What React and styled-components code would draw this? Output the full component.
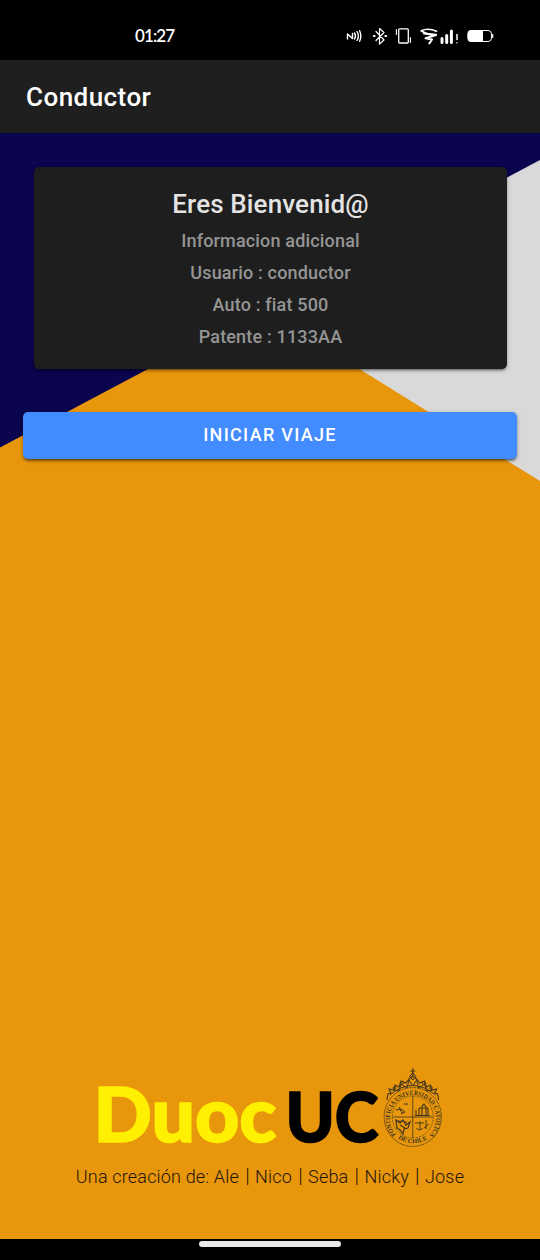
import React from "react";
import styled, { createGlobalStyle } from "styled-components";

const GlobalStyle = createGlobalStyle`
  * { box-sizing: border-box; }
  body { margin: 0; background: #000; font-family: Roboto, "Noto Sans", sans-serif; }
`;

const Screen = styled.div`
  width: 540px;
  height: 1260px;
  display: flex;
  flex-direction: column;
  background: #000;
  overflow: hidden;
`;

const StatusBar = styled.header`
  height: 60px;
  flex: none;
  display: flex;
  align-items: flex-start;
  justify-content: space-between;
  padding: 25px 46px 0 135px;
  color: #fff;
`;

const Clock = styled.time`
  font: 600 17px/22px Lato, sans-serif;
  letter-spacing: -0.9px;
`;

const StatusIcons = styled.svg`
  width: 150px;
  height: 22px;
  display: block;
`;

const Toolbar = styled.div`
  height: 73px;
  flex: none;
  display: flex;
  align-items: center;
  padding: 0 26px 0;
  background: #1f1f1f;
`;

const ToolbarTitle = styled.h1`
  margin: 0;
  font-size: 26px;
  line-height: 32px;
  font-weight: 500;
  letter-spacing: 0.45px;
  color: #fff;
`;

const Content = styled.main`
  height: 1106px;
  flex: none;
  display: flex;
  flex-direction: column;
  padding: 34px 23px 0;
  position: relative;
  isolation: isolate;
`;

const Backdrop = styled.svg`
  position: absolute;
  inset: 0;
  width: 100%;
  height: 100%;
  z-index: -1;
`;

const Card = styled.section`
  height: 202px;
  margin: 0 10px 0 11px;
  padding-top: 21px;
  border-radius: 5px;
  background: #1e1e1e;
  box-shadow: 0 3px 2px -2px rgba(0, 0, 0, 0.3), 0 2px 3px rgba(0, 0, 0, 0.2), 0 1px 5px rgba(0, 0, 0, 0.15);
  text-align: center;
`;

const CardTitle = styled.h2`
  margin: 0 0 5px;
  font-size: 26px;
  line-height: 32px;
  font-weight: 500;
  letter-spacing: 0.12px;
  color: #e4e4e4;
`;

const CardLine = styled.p`
  margin: 0;
  font-size: 18px;
  line-height: 32px;
  font-weight: 500;
  letter-spacing: 0.17px;
  color: #959595;
`;

const StartButton = styled.button`
  height: 47px;
  flex: none;
  margin: 43px 0 0;
  padding: 0 0 1px;
  border: 0;
  border-radius: 5px;
  background: #428cff;
  box-shadow: 0 3px 2px -2px rgba(0, 0, 0, 0.35), 0 2px 3px rgba(0, 0, 0, 0.3), 0 1px 5px rgba(0, 0, 0, 0.15);
  color: #fff;
  font: 500 18px/24px Roboto, sans-serif;
  letter-spacing: 1.3px;
`;

const Branding = styled.footer`
  margin-top: auto;
  padding-bottom: 47px;
  display: flex;
  flex-direction: column;
  align-items: center;
`;

const Logo = styled.svg`
  width: 360px;
  height: 84px;
  display: block;
  overflow: visible;
`;

const Credits = styled.p`
  margin: 12px 0 0;
  font: 300 18px/30px Roboto, "Noto Sans", sans-serif;
  letter-spacing: 0.17px;
  white-space: nowrap;
  color: #24150a;
`;

const Separator = styled.span`
  margin: 0 0.8px 0 1.6px;
  font-size: 20px;
  line-height: 1;
`;

const NavigationBar = styled.nav`
  flex: 1;
  display: flex;
  justify-content: center;
  padding-top: 2px;
`;

const NavigationHandle = styled.div`
  width: 142px;
  height: 6px;
  border-radius: 3px;
  background: #e9e9e9;
`;

function DeviceIcons() {
  return (
    <StatusIcons viewBox="344 25 150 22" fill="none" stroke="#fff" strokeLinecap="round" strokeLinejoin="round">
      <path d="M347.5 39v-5l5 4.5v-5" strokeWidth="1.4" />
      <path d="M354.5 33q2 3 0 6M357 31.5q2.7 4.5 0 9M359.6 30.7q2.4 5.3 0 10.6" strokeWidth="1.4" />
      <path d="M376 31.5l8 8.5-4.5 4V28.5l4.5 4-8 8" strokeWidth="1.2" />
      <path d="M373.8 36h.8M385.3 36h.8" strokeWidth="2" />
      <rect x="398.7" y="28.8" width="9.6" height="14.2" rx="1" strokeWidth="1.3" />
      <path d="M396.4 29.5v5M410.4 37.5v5" strokeWidth="1.1" />
      <path d="M436.500 31.200Q428 27.500 421.200 30.800Q427 35.200 436 34.600" strokeWidth="1.700" />
      <path d="M424 33.500L436 35L425.500 38.300L432 39.500L429.300 43.500" strokeWidth="2" />
      <path d="M442 38.500v4M446.700 35.500v7M451.400 31v11.500" strokeWidth="3" />
      <path d="M457 34.500v5M457 42.700v.1" strokeWidth="1.500" />
      <rect x="468" y="30.500" width="23.500" height="11" rx="3.500" strokeWidth="1" />
      <path d="M471.500 30H483v12h-11.500a4 4 0 0 1-4-4v-4a4 4 0 0 1 4-4Z" fill="#fff" stroke="none" />
      <path d="M492.700 34.500v3" strokeWidth="1.200" />
    </StatusIcons>
  );
}

function Crest() {
  return (
    <g fill="none" stroke="#40351e" strokeWidth="0.8">
      <defs>
        <path id="crestRing" d="M396 1134.500A23 23.500 0 1 1 430 1134.500" />
        <path id="crestBase" d="M398 1138.500A27 27.500 0 0 0 428 1138.500" />
      </defs>
      <ellipse cx="412.800" cy="1117" rx="28.600" ry="29.400" strokeDasharray="2 .6" />
      <ellipse cx="412.800" cy="1117" rx="20.500" ry="21" strokeWidth="0.600" strokeDasharray="2 1" />
      <path d="M392.500 1117h40.500M412.800 1096v42" />
      <g fill="#40351e" stroke="none" fontFamily="Liberation Serif, serif" fontSize="6.800" fontWeight="700">
        <text><textPath href="#crestRing" textLength="108" lengthAdjust="spacingAndGlyphs">PONTIFICIA UNIVERSIDAD CATOLICA</textPath></text>
        <text fontSize="6"><textPath href="#crestBase" textLength="31" lengthAdjust="spacingAndGlyphs">DE CHILE</textPath></text>
      </g>
      <path d="M387 1100l1-6 3-1-2-4 5 1 1-5 4 2 2-6 5 2 3-4 3.800-3 3.800 3 3 4 5-2 2 6 4-2 1 5 5-1-2 4 3 1 1 6" strokeWidth="1.100" />
      <path d="M390 1095q22-19 45.600 0M393 1090l6 1 2-7 6 4 2-8 3.800 6 3.800-6 2 8 6-4 2 7 6-1" strokeWidth="1" />
      <path d="M412.800 1068v8M410.300 1071h5M412.800 1072.500l-3 4 3 3.500 3-3.500Z" strokeWidth="1" />
      <circle cx="402" cy="1083" r="1.400" /><circle cx="423.600" cy="1083" r="1.400" />
      <circle cx="394.500" cy="1088" r="1.400" /><circle cx="431" cy="1088" r="1.400" />
      <path d="M396 1110l5-1 4 3-4 2M399 1107l3 6M404 1104h4" strokeWidth="1" />
      <path d="M416 1115v-5M419 1115v-7M422 1115v-9l2-2 2 3v8M428 1115v-7M415 1115.500h15M419 1108h9" strokeWidth="1.100" />
      <path d="M396 1120l4 3 3-3 3 5 4-3-2 6-4 1-1 5-3-4-3-2ZM400 1125l5 3M398 1121l9 1" strokeWidth="1.200" />
      <path d="M420 1121v9M416 1128q4 4 7 0M415 1123h9M426 1120v9M424 1128l5-4" strokeWidth="0.900" />
    </g>
  );
}

function DuocLogo() {
  return (
    <Logo viewBox="90 1066 360 84">
      <g fontFamily="Lato, Noto Sans, sans-serif" fontWeight="900" strokeWidth="1.600">
        <text x="93.500" y="1142.300" fontSize="76" textLength="183" lengthAdjust="spacingAndGlyphs" fill="#ffef00" stroke="#ffef00">Duoc</text>
        <text x="285.500" y="1142.300" fontSize="69" textLength="93" lengthAdjust="spacingAndGlyphs" fill="#000" stroke="#000">UC</text>
      </g>
      <Crest />
    </Logo>
  );
}

const authors = ["Ale", "Nico", "Seba", "Nicky", "Jose"];

export default function App() {
  return (
    <>
      <GlobalStyle />
      <Screen>
        <StatusBar>
          <Clock>01:27</Clock>
          <DeviceIcons />
        </StatusBar>
        <Toolbar>
          <ToolbarTitle>Conductor</ToolbarTitle>
        </Toolbar>
        <Content>
          <Backdrop viewBox="0 133 540 1106" preserveAspectRatio="none">
            <path fill="#0a054e" d="M0 133h540v1106H0z" />
            <path fill="#d9d9d9" d="M262 308.500L540 160V520L262 340z" />
            <path fill="#e8960c" d="M0 447.500L262 308.500L540 481V1239H0z" />
          </Backdrop>
          <Card>
            <CardTitle>Eres Bienvenid@</CardTitle>
            <CardLine>Informacion adicional</CardLine>
            <CardLine>Usuario : conductor</CardLine>
            <CardLine>Auto : fiat 500</CardLine>
            <CardLine>Patente : 1133AA</CardLine>
          </Card>
          <StartButton>INICIAR VIAJE</StartButton>
          <Branding>
            <DuocLogo />
            <Credits>
              Una creación de:{" "}
              {authors.map((name, i) => (
                <React.Fragment key={name}>
                  {i > 0 && <> <Separator>|</Separator> </>}
                  {name}
                </React.Fragment>
              ))}
            </Credits>
          </Branding>
        </Content>
        <NavigationBar>
          <NavigationHandle />
        </NavigationBar>
      </Screen>
    </>
  );
}
